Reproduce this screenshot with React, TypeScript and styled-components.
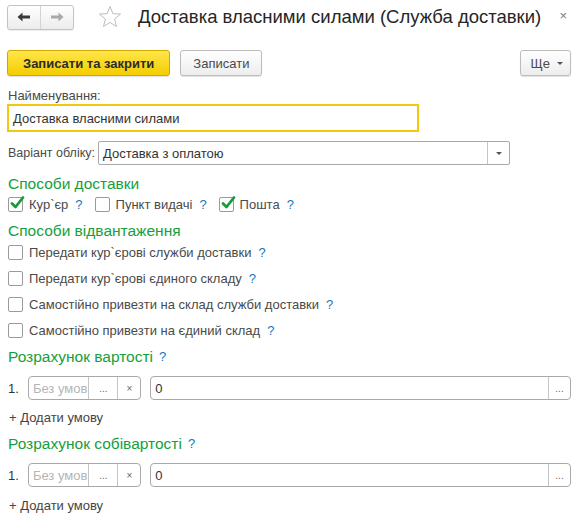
import React from "react";
import styled, { createGlobalStyle } from "styled-components";

const Global = createGlobalStyle`
  html, body { margin: 0; padding: 0; background: #fff; }
  body { font-family: "Liberation Sans", Arial, sans-serif; font-size: 13px; color: #4a4a4a; }
  * { box-sizing: border-box; }
`;

const Page = styled.div`
  width: 577px;
  height: 517px;
  padding: 4px 6px 0 7px;
  overflow: hidden;
`;

const Header = styled.div`
  display: flex;
  align-items: center;
  height: 26px;
`;

const NavGroup = styled.div`
  display: flex;
  width: 67px;
  height: 25px;
  border: 1px solid #c4c4c4;
  border-radius: 3px;
  background: linear-gradient(#ffffff, #ececec);
  box-shadow: 0 1px 1px rgba(0,0,0,0.08);
`;

const NavBtn = styled.div<{ $divider?: boolean }>`
  flex: 1;
  display: flex;
  align-items: center;
  justify-content: center;
  border-right: ${(p) => (p.$divider ? "1px solid #d4d4d4" : "none")};
`;

const StarWrap = styled.div`
  margin-left: 24px;
  width: 24px;
  height: 24px;
  display: flex;
  align-items: center;
  justify-content: center;
`;

const Title = styled.div`
  margin-left: 16px;
  font-size: 18.5px;
  color: #262626;
  white-space: nowrap;
`;

const Close = styled.div`
  margin-left: auto;
  margin-right: 4px;
  align-self: flex-start;
  margin-top: 4px;
  font-size: 13px;
  color: #7a7a7a;
`;

const CommandBar = styled.div`
  display: flex;
  align-items: center;
  margin-top: 20px;
  height: 26px;
`;

const Button = styled.div<{ $primary?: boolean }>`
  height: 26px;
  display: flex;
  align-items: center;
  justify-content: center;
  padding: 0 ${(p) => (p.$primary ? "15px" : "12px")};
  margin-right: 10px;
  border: 1px solid ${(p) => (p.$primary ? "#d3a900" : "#bcbcbc")};
  border-radius: 3px;
  background: ${(p) =>
    p.$primary ? "linear-gradient(#ffe64a, #f4cd00)" : "linear-gradient(#ffffff, #ededed)"};
  box-shadow: 0 1px 1px rgba(0,0,0,0.12);
  font-weight: ${(p) => (p.$primary ? "bold" : "normal")};
  color: ${(p) => (p.$primary ? "#2b2b2b" : "#4a4a4a")};
  font-size: 13px;
`;

const MoreButton = styled(Button)`
  margin-left: auto;
  margin-right: 0;
  padding: 0 7px 0 10px;
  gap: 7px;
`;

const Caret = styled.span`
  width: 0;
  height: 0;
  border-left: 3px solid transparent;
  border-right: 3px solid transparent;
  border-top: 3px solid #555;
`;

const FieldLabel = styled.div`
  margin-top: 12px;
  margin-left: 1px;
  color: #4a4a4a;
  line-height: 15px;
`;

const NameInput = styled.div`
  margin-top: 1px;
  width: 412px;
  height: 28px;
  border: 2px solid #f3c90f;
  display: flex;
  align-items: center;
  padding-left: 4px;
  color: #333;
`;

const InlineField = styled.div`
  display: flex;
  align-items: center;
  margin-top: 9px;
`;

const InlineLabel = styled.div`
  width: 91px;
  padding-left: 1px;
  font-size: 12.5px;
  color: #4a4a4a;
  white-space: nowrap;
`;

const Box = styled.div<{ $w: number }>`
  width: ${(p) => p.$w}px;
  height: 24px;
  border: 1px solid #a9a9a9;
  border-radius: 2px;
  display: flex;
  align-items: stretch;
  background: #fff;
`;

const BoxText = styled.div<{ $muted?: boolean }>`
  flex: 1;
  display: flex;
  align-items: center;
  padding-left: 4px;
  color: ${(p) => (p.$muted ? "#b5b5b5" : "#333")};
  white-space: nowrap;
  overflow: hidden;
`;

const BoxBtn = styled.div<{ $w?: number }>`
  width: ${(p) => p.$w ?? 22}px;
  border-left: 1px solid #c4c4c4;
  display: flex;
  align-items: center;
  justify-content: center;
  color: #666;
  font-size: 10px;
`;

const SectionTitle = styled.div<{ $top: number }>`
  margin-top: ${(p) => p.$top}px;
  margin-left: 1px;
  font-size: 15.5px;
  line-height: 18px;
  color: #14a03c;
  display: flex;
  align-items: center;
  gap: 6px;
`;

const Help = styled.span`
  color: #1b75bb;
  font-size: 13px;
`;

const CheckRow = styled.div`
  display: flex;
  align-items: center;
  margin-top: 2px;
  height: 18px;
`;

const CheckItem = styled.label`
  display: flex;
  align-items: center;
  height: 18px;
  margin-right: 11px;
  color: #4a4a4a;
  white-space: nowrap;
`;

const CheckList = styled.div`
  display: flex;
  flex-direction: column;
  gap: 8px;
  margin-top: 3px;
`;

const CheckBoxWrap = styled.span`
  position: relative;
  width: 15px;
  height: 15px;
  margin-left: 1px;
  margin-right: 6px;
  border: 1px solid #9a9a9a;
  border-radius: 2px;
  background: #fff;
  flex-shrink: 0;
`;

const Tick = styled.svg`
  position: absolute;
  left: 1px;
  top: -3px;
`;

const ItemHelp = styled(Help)`
  margin-left: 7px;
`;

const CondRow = styled.div`
  display: flex;
  align-items: center;
  margin-top: 10px;
`;

const RowNum = styled.div`
  width: 21px;
  padding-left: 1px;
  color: #333;
`;

const CondBox = styled(Box)`
  border-radius: 4px;
`;

const Spacer = styled.div`
  width: 9px;
`;

const AddLink = styled.div<{ $top: number }>`
  margin-top: ${(p) => p.$top}px;
  margin-left: 2px;
  line-height: 15px;
  color: #444;
`;

const Check = ({ checked }: { checked?: boolean }) => (
  <CheckBoxWrap>
    {checked && (
      <Tick width="16" height="16" viewBox="0 0 16 16">
        <path d="M2 8.5 L5.5 12 L13 2.5" fill="none" stroke="#1a9a3c" strokeWidth="2.8" strokeLinecap="round" strokeLinejoin="round" />
      </Tick>
    )}
  </CheckBoxWrap>
);

const Condition = () => (
  <CondRow>
    <RowNum>1.</RowNum>
    <CondBox $w={114}>
      <BoxText $muted>Без умов</BoxText>
      <BoxBtn $w={29}>...</BoxBtn>
      <BoxBtn $w={23}>×</BoxBtn>
    </CondBox>
    <Spacer />
    <CondBox $w={423}>
      <BoxText>0</BoxText>
      <BoxBtn $w={22}>...</BoxBtn>
    </CondBox>
  </CondRow>
);

export default function App() {
  return (
    <Page>
      <Global />
      <Header>
        <NavGroup>
          <NavBtn $divider>
            <svg width="14" height="10" viewBox="0 0 14 10">
              <path d="M0.5 5 L5.5 0.5 L5.5 3.5 L13 3.5 L13 6.5 L5.5 6.5 L5.5 9.5 Z" fill="#3b3b3b" />
            </svg>
          </NavBtn>
          <NavBtn>
            <svg width="14" height="10" viewBox="0 0 14 10">
              <path d="M13.5 5 L8.5 0.5 L8.5 3.5 L1 3.5 L1 6.5 L8.5 6.5 L8.5 9.5 Z" fill="#a9a9a9" />
            </svg>
          </NavBtn>
        </NavGroup>
        <StarWrap>
          <svg width="24" height="24" viewBox="0 0 24 24">
            <path d="M12 1.5 L14.9 8.6 L22.5 9.1 L16.6 14 L18.5 21.5 L12 17.4 L5.5 21.5 L7.4 14 L1.5 9.1 L9.1 8.6 Z" fill="none" stroke="#bdbdbd" strokeWidth="1" strokeLinejoin="miter" />
          </svg>
        </StarWrap>
        <Title>Доставка власними силами (Служба доставки)</Title>
        <Close>×</Close>
      </Header>

      <CommandBar>
        <Button $primary>Записати та закрити</Button>
        <Button>Записати</Button>
        <MoreButton>
          Ще <Caret />
        </MoreButton>
      </CommandBar>

      <FieldLabel>Найменування:</FieldLabel>
      <NameInput>Доставка власними силами</NameInput>

      <InlineField>
        <InlineLabel>Варіант обліку:</InlineLabel>
        <Box $w={412}>
          <BoxText>Доставка з оплатою</BoxText>
          <BoxBtn $w={22}>
            <Caret />
          </BoxBtn>
        </Box>
      </InlineField>

      <SectionTitle $top={10}>Способи доставки</SectionTitle>
      <CheckRow>
        <CheckItem>
          <Check checked />
          Кур`єр<ItemHelp>?</ItemHelp>
        </CheckItem>
        <CheckItem>
          <Check />
          Пункт видачі<ItemHelp>?</ItemHelp>
        </CheckItem>
        <CheckItem>
          <Check checked />
          Пошта<ItemHelp>?</ItemHelp>
        </CheckItem>
      </CheckRow>

      <SectionTitle $top={9}>Способи відвантаження</SectionTitle>
      <CheckList>
        <CheckItem>
          <Check />
          Передати кур`єрові служби доставки<ItemHelp>?</ItemHelp>
        </CheckItem>
        <CheckItem>
          <Check />
          Передати кур`єрові єдиного складу<ItemHelp>?</ItemHelp>
        </CheckItem>
        <CheckItem>
          <Check />
          Самостійно привезти на склад служби доставки<ItemHelp>?</ItemHelp>
        </CheckItem>
        <CheckItem>
          <Check />
          Самостійно привезти на єдиний склад<ItemHelp>?</ItemHelp>
        </CheckItem>
      </CheckList>

      <SectionTitle $top={9}>
        Розрахунок вартості <Help>?</Help>
      </SectionTitle>
      <Condition />
      <AddLink $top={10}>+ Додати умову</AddLink>

      <SectionTitle $top={10}>
        Розрахунок собівартості <Help>?</Help>
      </SectionTitle>
      <Condition />
      <AddLink $top={11}>+ Додати умову</AddLink>
    </Page>
  );
}
